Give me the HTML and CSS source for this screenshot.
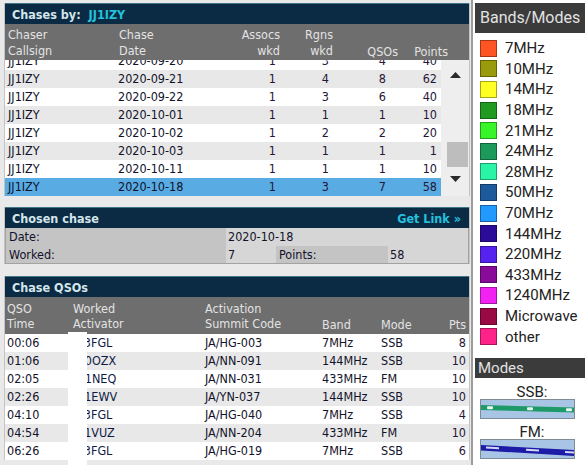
FILE: index.html
```html
<!DOCTYPE html>
<html>
<head>
<meta charset="utf-8">
<link rel="stylesheet" href="styles.css">
</head>
<body>
<div class="page">
  <div class="main">
    <section class="panel chases">
      <div class="bar"><span class="bar-title">Chases by: <span class="call">JJ1IZY</span></span></div>
      <div class="chead">
        <div>Chaser<br>Callsign</div>
        <div>Chase<br>Date</div>
        <div class="r">Assocs<br>wkd</div>
        <div class="r">Rgns<br>wkd</div>
        <div class="r end">QSOs</div>
        <div class="r end">Points</div>
      </div>
      <div class="cbody">
        <div class="rows">
          <div class="rows-inner">
            <div class="crow"><span>JJ1IZY</span><span>2020-09-20</span><span class="n">1</span><span class="n">3</span><span class="n">4</span><span class="n">40</span></div>
            <div class="crow alt"><span>JJ1IZY</span><span>2020-09-21</span><span class="n">1</span><span class="n">4</span><span class="n">8</span><span class="n">62</span></div>
            <div class="crow"><span>JJ1IZY</span><span>2020-09-22</span><span class="n">1</span><span class="n">3</span><span class="n">6</span><span class="n">40</span></div>
            <div class="crow alt"><span>JJ1IZY</span><span>2020-10-01</span><span class="n">1</span><span class="n">1</span><span class="n">1</span><span class="n">10</span></div>
            <div class="crow"><span>JJ1IZY</span><span>2020-10-02</span><span class="n">1</span><span class="n">2</span><span class="n">2</span><span class="n">20</span></div>
            <div class="crow alt"><span>JJ1IZY</span><span>2020-10-03</span><span class="n">1</span><span class="n">1</span><span class="n">1</span><span class="n">1</span></div>
            <div class="crow"><span>JJ1IZY</span><span>2020-10-11</span><span class="n">1</span><span class="n">1</span><span class="n">1</span><span class="n">10</span></div>
            <div class="crow sel"><span>JJ1IZY</span><span>2020-10-18</span><span class="n">1</span><span class="n">3</span><span class="n">7</span><span class="n">58</span></div>
          </div>
        </div>
        <div class="scrollbar">
          <svg class="arrow-up" width="11" height="6" viewBox="0 0 11 6"><polygon points="0,6 11,6 5.5,0" fill="#2a2a2a"/></svg>
          <div class="thumb"></div>
          <svg class="arrow-down" width="11" height="6" viewBox="0 0 11 6"><polygon points="0,0 11,0 5.5,6" fill="#2a2a2a"/></svg>
        </div>
      </div>
    </section>

    <section class="panel chosen">
      <div class="bar"><span class="bar-title">Chosen chase</span><span class="getlink">Get Link »</span></div>
      <div class="info">
        <div class="info-row r1"><span class="lbl wide">Date:</span><span class="val grow">2020-10-18</span></div>
        <div class="info-row r2"><span class="lbl wide">Worked:</span><span class="val seven">7</span><span class="lbl pts">Points:</span><span class="val grow">58</span></div>
      </div>
    </section>

    <section class="panel qsos">
      <div class="bar"><span class="bar-title">Chase QSOs</span></div>
      <div class="qhead">
        <div>QSO<br>Time</div>
        <div>Worked<br>Activator</div>
        <div>Activation<br>Summit Code</div>
        <div class="end">Band</div>
        <div class="end">Mode</div>
        <div class="r end">Pts</div>
      </div>
      <div class="qbody">
        <div class="qrow"><span>00:06</span><span class="act">JA3FGL</span><span>JA/HG-003</span><span>7MHz</span><span>SSB</span><span class="n">8</span></div>
        <div class="qrow alt"><span>01:06</span><span class="act">JH0OZX</span><span>JA/NN-091</span><span>144MHz</span><span>SSB</span><span class="n">10</span></div>
        <div class="qrow"><span>02:05</span><span class="act">JH1NEQ</span><span>JA/NN-031</span><span>433MHz</span><span>FM</span><span class="n">10</span></div>
        <div class="qrow alt"><span>02:26</span><span class="act">JR1EWV</span><span>JA/YN-037</span><span>144MHz</span><span>SSB</span><span class="n">10</span></div>
        <div class="qrow"><span>04:10</span><span class="act">JA3FGL</span><span>JA/HG-040</span><span>7MHz</span><span>SSB</span><span class="n">4</span></div>
        <div class="qrow alt"><span>04:54</span><span class="act">JR1VUZ</span><span>JA/NN-204</span><span>433MHz</span><span>FM</span><span class="n">10</span></div>
        <div class="qrow"><span>06:26</span><span class="act">JA3FGL</span><span>JA/HG-019</span><span>7MHz</span><span>SSB</span><span class="n">6</span></div>
      </div>
      <div class="mask"></div>
    </section>
  </div>

  <aside class="side">
    <div class="side-bar">Bands/Modes</div>
    <ul class="legend">
      <li><span class="sw c7"></span>7MHz</li>
      <li><span class="sw c10"></span>10MHz</li>
      <li><span class="sw c14"></span>14MHz</li>
      <li><span class="sw c18"></span>18MHz</li>
      <li><span class="sw c21"></span>21MHz</li>
      <li><span class="sw c24"></span>24MHz</li>
      <li><span class="sw c28"></span>28MHz</li>
      <li><span class="sw c50"></span>50MHz</li>
      <li><span class="sw c70"></span>70MHz</li>
      <li><span class="sw c144"></span>144MHz</li>
      <li><span class="sw c220"></span>220MHz</li>
      <li><span class="sw c433"></span>433MHz</li>
      <li><span class="sw c1240"></span>1240MHz</li>
      <li><span class="sw cmw"></span>Microwave</li>
      <li><span class="sw cother"></span>other</li>
    </ul>
    <div class="side-bar modes-bar">Modes</div>
    <div class="mode">
      <div class="mode-label">SSB:</div>
      <svg class="mode-sample" width="95" height="20" viewBox="0 0 95 20">
        <rect x="0.5" y="0.5" width="94" height="19" fill="#a9c5e6" stroke="#7f8b97"/>
        <polygon points="1,6 94,8.5 94,13.5 1,11" fill="#1e9a68"/>
        <rect x="7" y="7.3" width="6" height="3" rx="1" fill="#e8f4ee"/>
        <rect x="47" y="8.3" width="6" height="3" rx="1" fill="#e8f4ee"/>
        <rect x="86" y="9.3" width="6" height="3" rx="1" fill="#e8f4ee"/>
      </svg>
    </div>
    <div class="mode">
      <div class="mode-label">FM:</div>
      <svg class="mode-sample" width="95" height="20" viewBox="0 0 95 20">
        <rect x="0.5" y="0.5" width="94" height="19" fill="#a9c5e6" stroke="#7f8b97"/>
        <polygon points="1,6 94,11 94,17 1,11.5" fill="#1c1ca6"/>
        <polygon points="6,7.6 19,8.3 19,10.3 6,9.6" fill="#d6d6f4"/>
        <polygon points="46,9.8 59,10.5 59,12.5 46,11.8" fill="#d6d6f4"/>
        <polygon points="85,11.9 94,12.4 94,14.4 85,13.9" fill="#d6d6f4"/>
      </svg>
    </div>
  </aside>
</div>
</body>
</html>
```

FILE: styles.css
```css
* { box-sizing: border-box; }

html, body {
  margin: 0;
  padding: 0;
  background: #ffffff;
}

body {
  font-family: "DejaVu Sans Condensed", "DejaVu Sans", sans-serif;
  font-size: 12.5px;
  color: #12122a;
}

.page {
  display: flex;
  width: 585px;
  height: 465px;
  overflow: hidden;
}

.main {
  width: 471px;
  flex: none;
  padding: 3px 1px 0 4px;
  background: #e9e9e9;
}

.panel {
  border-left: 1px solid #c4c4c4;
  border-right: 1px solid #c4c4c4;
}

.bar {
  height: 21px;
  background: #0b2a43;
  border-top: 1px solid #3f7688;
  color: #d3e6ec;
  font-weight: bold;
  display: flex;
  align-items: center;
  justify-content: space-between;
  padding: 0 8px 0 7px;
}

.call { color: #22c2dc; margin-left: 4px; }

.getlink { color: #25c0dd; }

/* chases table */
.chead {
  height: 36px;
  background: #6e6e6e;
  color: #e3e3e3;
  display: grid;
  grid-template-columns: 111px 101px 60px 53px 65px 50px;
  padding: 3px 0 0 3px;
  line-height: 16px;
}

.chead .r, .qhead .r { text-align: right; }
.chead .end, .qhead .end { align-self: end; }

.cbody {
  display: flex;
  height: 136px;
  overflow: hidden;
  background: #ffffff;
}

.rows {
  flex: 1;
  overflow: hidden;
}

.rows-inner { margin-top: -8px; }

.crow {
  display: grid;
  grid-template-columns: 110px 98px 60px 53px 57px 51px;
  height: 18px;
  line-height: 18px;
  padding-left: 3px;
  background: #ffffff;
  white-space: nowrap;
}

.crow.alt, .qrow.alt { background: #e8e8e8; }
.crow.sel { background: #58abe3; }

.n { text-align: right; color: #261638; }

.scrollbar {
  width: 28px;
  flex: none;
  background: #eeeeee;
  display: flex;
  flex-direction: column;
  align-items: center;
}

.arrow-up { margin-top: 12px; display: block; }
.thumb {
  width: 21px;
  height: 25px;
  margin-top: 64px;
  align-self: flex-end;
  margin-right: 1px;
  background: #bdbdbd;
}
.arrow-down { margin-top: 9px; display: block; }

/* chosen chase */
.chosen { margin-top: 11px; }

.info {
  border: 1px solid #a2a2a2;
  border-top: none;
  background: #d6d6d6;
}

.info-row {
  display: flex;
  line-height: 18px;
  height: 18px;
}
.info-row.r2 { height: 17px; line-height: 17px; }

.lbl {
  background: #c4c4c4;
  padding-left: 3px;
}
.lbl.wide { width: 220px; }
.lbl.pts { width: 112px; }

.val {
  background: #d6d6d6;
  padding-left: 2px;
}
.val.seven { width: 50px; }
.val.grow { flex: 1; }

/* chase qsos */
.qsos {
  margin-top: 12px;
  position: relative;
}

.qhead {
  height: 37px;
  background: #6e6e6e;
  color: #e3e3e3;
  display: grid;
  grid-template-columns: 66px 132px 117px 59px 50px 1fr;
  padding: 4px 3px 2px 2px;
  line-height: 15px;
  white-space: nowrap;
}

.qbody { background: #ffffff; }

.qrow {
  display: grid;
  grid-template-columns: 66px 132px 117px 59px 50px 1fr;
  height: 18px;
  line-height: 18px;
  padding: 0 3px 0 2px;
  background: #ffffff;
  white-space: nowrap;
}

.act { color: #101a44; }

.mask {
  position: absolute;
  left: 63px;
  top: 56px;
  width: 19px;
  bottom: -6px;
  background: #ffffff;
}

/* side legend */
.side {
  flex: 1;
  border-left: 2px solid #9c9c9c;
  padding: 3px 0 0 2px;
  background: #ffffff;
  font-family: Roboto, "Liberation Sans", sans-serif;
  color: #222222;
}

.side-bar {
  height: 30px;
  line-height: 30px;
  background: #3b3b3b;
  color: #e2e2e2;
  font-size: 16px;
  padding-left: 5px;
  white-space: nowrap;
}

.legend {
  list-style: none;
  margin: 0;
  padding: 5px 0 0 5px;
}

.legend li {
  height: 20.6px;
  display: flex;
  align-items: center;
  font-size: 15px;
  white-space: nowrap;
}

.sw {
  width: 17px;
  height: 17px;
  margin-right: 8px;
  border: 1px solid rgba(0, 0, 0, 0.35);
  flex: none;
}

.c7 { background: #ff5522; }
.c10 { background: #9a9a0c; }
.c14 { background: #ffff22; }
.c18 { background: #219a21; }
.c21 { background: #37f526; }
.c24 { background: #1c9a5c; }
.c28 { background: #2af5a6; }
.c50 { background: #1c5a9c; }
.c70 { background: #2299ff; }
.c144 { background: #2a0c99; }
.c220 { background: #5522f0; }
.c433 { background: #880c99; }
.c1240 { background: #f222f2; }
.cmw { background: #990a44; }
.cother { background: #ff2288; }

.modes-bar {
  margin-top: 11px;
  height: 20px;
  line-height: 20px;
  font-size: 15px;
  padding-left: 3px;
}

.mode { padding-left: 5px; }

.mode-label {
  width: 95px;
  text-align: center;
  padding-left: 9px;
  font-size: 15px;
  line-height: 14px;
  margin-top: 7px;
}

.mode-sample { display: block; margin-top: 0; }
.mode + .mode .mode-label { margin-top: 6px; }
```
